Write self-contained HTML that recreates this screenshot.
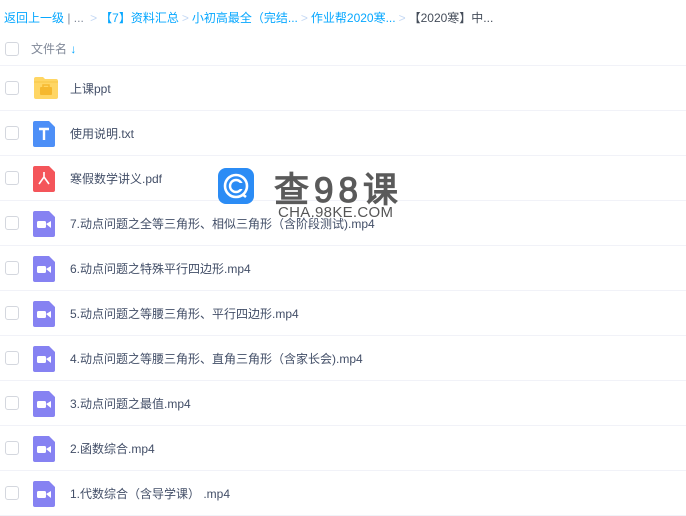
<!DOCTYPE html>
<html><head><meta charset="utf-8"><style>
*{margin:0;padding:0;box-sizing:border-box}
body{width:686px;height:514px;overflow:hidden;background:#fff;font-family:"Liberation Sans","Noto Sans CJK SC",sans-serif;font-size:12px;color:#424e67;position:relative}
.bc{position:absolute;left:4px;top:9px;white-space:nowrap;font-size:12px;color:#06a7ff}
.bc .s{color:#c4d8f4;margin:0 3px}
.bc .g{color:#818999}
.bc .c{color:#454d5a}
.hd{position:absolute;left:0;top:36px;width:686px;height:30px;border-bottom:1px solid #f1f2f8}
.cb{position:absolute;left:5px;width:14px;height:14px;border:1px solid #d4d7de;border-radius:3px;background:#fff}
.hd .t{position:absolute;left:31px;top:4px;color:#818999}
.row{position:absolute;left:0;width:686px;height:45px;border-bottom:1px solid #f1f2f8}
.row .cb{top:15px}
.row .n{position:absolute;left:70px;top:14px;color:#424e67;white-space:nowrap}
.ic{position:absolute;left:33px;top:10px}
</style></head><body>
<div class="bc">返回上一级<span class="g"> | ... </span><span class="s">&gt;</span>【7】资料汇总<span class="s">&gt;</span>小初高最全（完结...<span class="s">&gt;</span>作业帮2020寒...<span class="s">&gt;</span><span class="c">【2020寒】中...</span></div>
<div class="hd"><div class="cb" style="top:6px"></div><span class="t">文件名 <span style="color:#06a7ff;font-weight:bold">↓</span></span></div>

<div class="row" style="top:66px"><div class="cb"></div>
<svg class="ic" width="26" height="24" viewBox="0 0 26 24"><path d="M1 3a2 2 0 0 1 2-2h7l2 2h11a2 2 0 0 1 2 2v16a2 2 0 0 1-2 2H3a2 2 0 0 1-2-2z" fill="#ffd664"/><path d="M1 6h24" stroke="#f7c744" stroke-width="1"/><rect x="7" y="11" width="12" height="8" rx="1" fill="#f5b82e"/><rect x="10" y="9" width="6" height="3" fill="none" stroke="#f5b82e" stroke-width="1.5"/></svg>
<span class="n">上课ppt</span></div>

<div class="row" style="top:111px"><div class="cb"></div>
<svg class="ic" width="22" height="26" viewBox="0 0 22 26"><path d="M2 0h14l6 6v18a2 2 0 0 1-2 2H2a2 2 0 0 1-2-2V2a2 2 0 0 1 2-2z" fill="#4d8ff7"/><path d="M6 8h10M11 8v11" stroke="#fff" stroke-width="2.4"/></svg>
<span class="n">使用说明.txt</span></div>

<div class="row" style="top:156px"><div class="cb"></div>
<svg class="ic" width="22" height="26" viewBox="0 0 22 26"><path d="M2 0h14l6 6v18a2 2 0 0 1-2 2H2a2 2 0 0 1-2-2V2a2 2 0 0 1 2-2z" fill="#f4555a"/><path d="M11 6v5M11 11l-5 7M11 11l5 7" stroke="#fff" stroke-width="1.6" fill="none"/></svg>
<span class="n">寒假数学讲义.pdf</span></div>

<div class="row" style="top:201px"><div class="cb"></div><svg class="ic" width="22" height="26" viewBox="0 0 22 26"><path d="M2 0h14l6 6v18a2 2 0 0 1-2 2H2a2 2 0 0 1-2-2V2a2 2 0 0 1 2-2z" fill="#8682f2"/><rect x="4" y="10" width="9" height="7" rx="1.5" fill="#fff"/><path d="M13 13l5-3v7z" fill="#fff"/></svg><span class="n">7.动点问题之全等三角形、相似三角形（含阶段测试).mp4</span></div>
<div class="row" style="top:246px"><div class="cb"></div><svg class="ic" width="22" height="26" viewBox="0 0 22 26"><path d="M2 0h14l6 6v18a2 2 0 0 1-2 2H2a2 2 0 0 1-2-2V2a2 2 0 0 1 2-2z" fill="#8682f2"/><rect x="4" y="10" width="9" height="7" rx="1.5" fill="#fff"/><path d="M13 13l5-3v7z" fill="#fff"/></svg><span class="n">6.动点问题之特殊平行四边形.mp4</span></div>
<div class="row" style="top:291px"><div class="cb"></div><svg class="ic" width="22" height="26" viewBox="0 0 22 26"><path d="M2 0h14l6 6v18a2 2 0 0 1-2 2H2a2 2 0 0 1-2-2V2a2 2 0 0 1 2-2z" fill="#8682f2"/><rect x="4" y="10" width="9" height="7" rx="1.5" fill="#fff"/><path d="M13 13l5-3v7z" fill="#fff"/></svg><span class="n">5.动点问题之等腰三角形、平行四边形.mp4</span></div>
<div class="row" style="top:336px"><div class="cb"></div><svg class="ic" width="22" height="26" viewBox="0 0 22 26"><path d="M2 0h14l6 6v18a2 2 0 0 1-2 2H2a2 2 0 0 1-2-2V2a2 2 0 0 1 2-2z" fill="#8682f2"/><rect x="4" y="10" width="9" height="7" rx="1.5" fill="#fff"/><path d="M13 13l5-3v7z" fill="#fff"/></svg><span class="n">4.动点问题之等腰三角形、直角三角形（含家长会).mp4</span></div>
<div class="row" style="top:381px"><div class="cb"></div><svg class="ic" width="22" height="26" viewBox="0 0 22 26"><path d="M2 0h14l6 6v18a2 2 0 0 1-2 2H2a2 2 0 0 1-2-2V2a2 2 0 0 1 2-2z" fill="#8682f2"/><rect x="4" y="10" width="9" height="7" rx="1.5" fill="#fff"/><path d="M13 13l5-3v7z" fill="#fff"/></svg><span class="n">3.动点问题之最值.mp4</span></div>
<div class="row" style="top:426px"><div class="cb"></div><svg class="ic" width="22" height="26" viewBox="0 0 22 26"><path d="M2 0h14l6 6v18a2 2 0 0 1-2 2H2a2 2 0 0 1-2-2V2a2 2 0 0 1 2-2z" fill="#8682f2"/><rect x="4" y="10" width="9" height="7" rx="1.5" fill="#fff"/><path d="M13 13l5-3v7z" fill="#fff"/></svg><span class="n">2.函数综合.mp4</span></div>
<div class="row" style="top:471px"><div class="cb"></div><svg class="ic" width="22" height="26" viewBox="0 0 22 26"><path d="M2 0h14l6 6v18a2 2 0 0 1-2 2H2a2 2 0 0 1-2-2V2a2 2 0 0 1 2-2z" fill="#8682f2"/><rect x="4" y="10" width="9" height="7" rx="1.5" fill="#fff"/><path d="M13 13l5-3v7z" fill="#fff"/></svg><span class="n">1.代数综合（含导学课） .mp4</span></div>

<svg style="position:absolute;left:218px;top:168px" width="36" height="36" viewBox="0 0 36 36"><rect width="36" height="36" rx="8" fill="#2b8cf5"/><circle cx="18" cy="18" r="11" fill="none" stroke="#fff" stroke-width="2.6"/><circle cx="18" cy="18" r="6" fill="none" stroke="#fff" stroke-width="2.4"/><path d="M24 26l4 3" stroke="#fff" stroke-width="2.6"/><rect x="18" y="15" width="8" height="6" fill="#2b8cf5"/></svg>
<div style="position:absolute;left:274px;top:162px;font-size:35px;font-weight:normal;color:#5a5a5a;letter-spacing:5px;-webkit-text-stroke:1.2px #5a5a5a;white-space:nowrap">查98课</div>
<div style="position:absolute;left:278px;top:204px;font-size:15px;color:#555;white-space:nowrap;letter-spacing:0.3px">CHA.98KE.COM</div>
</body></html>
